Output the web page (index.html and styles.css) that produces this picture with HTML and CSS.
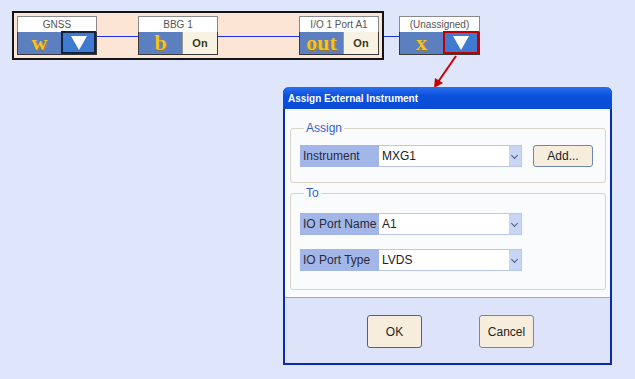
FILE: index.html
```html
<!DOCTYPE html>
<html lang="en">
<head>
  <meta charset="UTF-8" />
  <title>Assign External Instrument</title>
  <link rel="stylesheet" href="styles.css">
</head>
<body>

  <div class="chain-row">
    <div class="chain">
      <div class="block">
        <div class="label">GNSS</div>
        <div class="cells">
          <div class="letter">w</div>
          <div class="pick"><span class="tri"></span></div>
        </div>
      </div>
      <div class="wire short"></div>
      <div class="block">
        <div class="label">BBG 1</div>
        <div class="cells">
          <div class="letter">b</div>
          <div class="on">On</div>
        </div>
      </div>
      <div class="wire long"></div>
      <div class="block">
        <div class="label">I/O 1 Port A1</div>
        <div class="cells">
          <div class="letter">out</div>
          <div class="on">On</div>
        </div>
      </div>
    </div>
    <div class="wire outside"></div>
    <div class="block unassigned">
      <div class="label">(Unassigned)</div>
      <div class="cells">
        <div class="letter">x</div>
        <div class="pick active"><span class="tri"></span></div>
      </div>
    </div>
  </div>

  <svg class="pointer" width="40" height="40" viewBox="0 0 40 40">
    <line x1="31" y1="2" x2="13" y2="28" stroke="#c80000" stroke-width="2"/>
    <polygon points="9,34 10,24 18,29" fill="#c80000"/>
  </svg>

  <div class="dialog">
    <div class="titlebar">Assign External Instrument</div>
    <div class="dialog-body">
      <fieldset class="group assign">
        <legend>Assign</legend>
        <div class="field-row">
          <span class="field-label">Instrument</span>
          <div class="select">MXG1<span class="arrow"></span></div>
          <button class="btn add">Add...</button>
        </div>
      </fieldset>
      <fieldset class="group to">
        <legend>To</legend>
        <div class="field-row">
          <span class="field-label">IO Port Name</span>
          <div class="select">A1<span class="arrow"></span></div>
        </div>
        <div class="field-row">
          <span class="field-label">IO Port Type</span>
          <div class="select">LVDS<span class="arrow"></span></div>
        </div>
      </fieldset>
    </div>
    <div class="dialog-footer">
      <button class="btn big default">OK</button>
      <button class="btn big">Cancel</button>
    </div>
  </div>

</body>
</html>
```

FILE: styles.css
```css
* {
  margin: 0;
  padding: 0;
  box-sizing: border-box;
}
body {
  width: 635px;
  height: 379px;
  overflow: hidden;
  position: relative;
  background: #dfe5fa;
  font-family: 'Liberation Sans', Arial, sans-serif;
  color: #222;
}

/* signal chain */
.chain-row {
  display: flex;
  align-items: flex-start;
  margin: 11px 0 0 12px;
}
.chain {
  display: flex;
  align-items: flex-start;
  width: 372px;
  height: 49px;
  padding: 3px;
  border: 2px solid #141414;
  background: #fde5d6;
}
.wire {
  height: 1px;
  margin-top: 20px;
  background: #1b2fe6;
}
.wire.short { width: 41px; }
.wire.long { width: 81px; }
.wire.outside { width: 15px; margin-top: 25px; }
.block {
  width: 80px;
  height: 39px;
}
.unassigned {
  margin-top: 5px;
  width: 81px;
}
.label {
  height: 16px;
  border: 1px solid #8a8a8a;
  border-bottom: none;
  background: #fff;
  font-size: 10px;
  line-height: 15px;
  text-align: center;
  color: #555;
}
.cells {
  display: flex;
  height: 23px;
  border: 1px solid #3a3a3a;
  border-top: none;
}
.letter {
  width: 43px;
  background: #5b7fbf;
  color: #f3c22c;
  font-family: 'Liberation Serif', 'Times New Roman', serif;
  font-weight: bold;
  font-size: 22px;
  line-height: 21px;
  text-align: center;
  text-shadow: 1px 1px 0 #a07a18;
}
.pick {
  flex: 1;
  display: flex;
  align-items: center;
  justify-content: center;
  margin-top: -1px;
  border: 2px solid #16233e;
  background: #3e7bd0;
}
.pick.active {
  border-color: #c00000;
}
.tri {
  width: 0;
  height: 0;
  border-left: 8px solid transparent;
  border-right: 8px solid transparent;
  border-top: 14px solid #fff;
}
.on {
  flex: 1;
  border-left: 1px solid #9a9a9a;
  background: #f8f2e2;
  font-size: 11px;
  font-weight: bold;
  line-height: 22px;
  text-align: center;
  color: #3b3a22;
}

.pointer {
  position: absolute;
  left: 425px;
  top: 54px;
}

/* dialog */
.dialog {
  position: absolute;
  left: 283px;
  top: 87px;
  width: 329px;
  height: 278px;
  display: flex;
  flex-direction: column;
  border: 2px solid #0a2ca8;
  border-top: none;
  border-radius: 6px 6px 0 0;
  background: #dde3f8;
}
.titlebar {
  height: 22px;
  margin: 0 -2px;
  padding-left: 5px;
  border-radius: 6px 6px 0 0;
  background: linear-gradient(#2b6ff0, #0a50dc 40%, #0a4cd4);
  color: #fff;
  font-size: 10px;
  font-weight: bold;
  line-height: 24px;
}
.dialog-body {
  height: 189px;
  padding: 13px 4px 0 5px;
  background: #fafbfd;
  border-bottom: 1px solid #a9a9a9;
}
.group {
  border: 1px solid #d9d3c6;
  border-radius: 3px;
  padding: 0 0 0 9px;
}
.group legend {
  margin-left: 4px;
  padding: 0 2px;
  font-size: 12px;
  line-height: 12px;
  color: #2f62d8;
}
.assign {
  height: 61px;
  padding-top: 11px;
}
.to {
  height: 103px;
  margin-top: 4px;
  padding-top: 14px;
}
.to .field-row + .field-row {
  margin-top: 14px;
}
.field-row {
  display: flex;
  align-items: center;
  height: 22px;
}
.field-label {
  width: 79px;
  height: 22px;
  padding-left: 3px;
  background: #a2b7e7;
  font-size: 12px;
  line-height: 22px;
  color: #2a2a3a;
}
.select {
  position: relative;
  width: 143px;
  height: 22px;
  padding-left: 3px;
  border: 1px solid #b8c7ea;
  border-left: none;
  background: #fff;
  font-size: 12px;
  line-height: 21px;
}
.arrow {
  position: absolute;
  right: 0;
  top: 0;
  width: 12px;
  height: 20px;
  background: #c9d5f5;
}
.arrow::after {
  content: "";
  position: absolute;
  left: 3px;
  top: 7px;
  width: 4px;
  height: 4px;
  border-right: 1px solid #4a5a80;
  border-bottom: 1px solid #4a5a80;
  transform: rotate(45deg);
}
.btn {
  font-family: 'Liberation Sans', Arial, sans-serif;
  font-size: 12px;
  color: #1e1e1e;
  background: #f6eddd;
  border: 1px solid #6f86b6;
  border-radius: 3px;
}
.add {
  width: 60px;
  height: 22px;
  margin-left: 11px;
}
.dialog-footer {
  flex: 1;
  display: flex;
  justify-content: center;
  gap: 57px;
  padding: 17px 0 0 6px;
}
.big {
  width: 55px;
  height: 33px;
}
.default {
  border-color: #3a62b8;
}
```
